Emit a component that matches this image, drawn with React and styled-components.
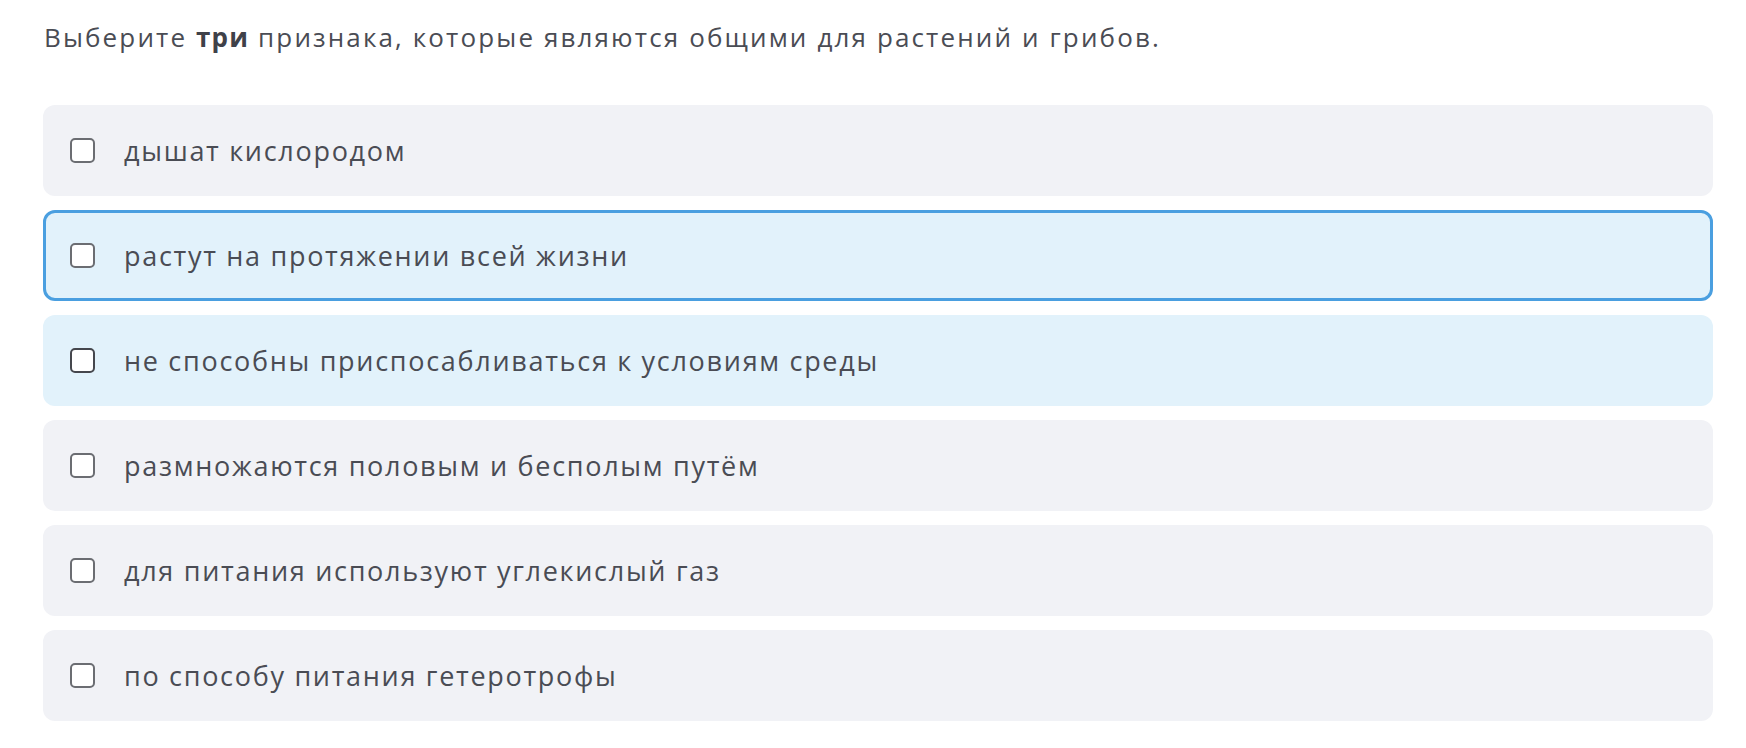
import React, { useState } from "react";
import styled, { createGlobalStyle } from "styled-components";

const GlobalStyle = createGlobalStyle`
  html, body {
    margin: 0;
    padding: 0;
    background: #ffffff;
  }
  body {
    font-family: "Open Sans", "Noto Sans", sans-serif;
    color: #4a4c54;
  }
`;

const Wrapper = styled.div`
  padding: 17px 33px 0 43px;
`;

const Title = styled.p`
  margin: 0 0 0 1px;
  font-size: 26px;
  letter-spacing: 2.13px;
  line-height: 40px;
  color: #4a4c54;

  b {
    font-weight: 700;
    letter-spacing: 1.2px;
    color: #3f4149;
  }
`;

const Options = styled.div`
  display: flex;
  flex-direction: column;
  gap: 14px;
  margin-top: 48px;
`;

const Option = styled.label`
  display: flex;
  align-items: center;
  gap: 29px;
  height: 91px;
  box-sizing: border-box;
  padding: 0 0 0 ${(p) => (p.$active ? 24 : 27)}px;
  border-radius: 12px;
  background: ${(p) => (p.$active || p.$hover ? "#e2f2fb" : "#f1f2f6")};
  border: ${(p) => (p.$active ? "3px solid #4a9fe0" : "none")};
  cursor: pointer;
`;

const Box = styled.span`
  flex: none;
  width: 25px;
  height: 25px;
  box-sizing: border-box;
  border: 2px solid ${(p) => (p.$dark ? "#45474d" : "#6b6d72")};
  border-radius: 5px;
  background: #ffffff;
`;

const Label = styled.span`
  font-size: 27px;
  letter-spacing: 1.7px;
  color: #4a4c54;
`;

const items = [
  "дышат кислородом",
  "растут на протяжении всей жизни",
  "не способны приспосабливаться к условиям среды",
  "размножаются половым и бесполым путём",
  "для питания используют углекислый газ",
  "по способу питания гетеротрофы",
];

export default function App() {
  const [active] = useState(1);
  const hover = 2;
  return (
    <Wrapper>
      <GlobalStyle />
      <Title>
        Выберите <b>три</b> признака, которые являются общими для растений и грибов.
      </Title>
      <Options>
        {items.map((text, i) => (
          <Option key={text} $active={i === active} $hover={i === hover}>
            <Box $dark={i === hover} />
            <Label>{text}</Label>
          </Option>
        ))}
      </Options>
    </Wrapper>
  );
}
